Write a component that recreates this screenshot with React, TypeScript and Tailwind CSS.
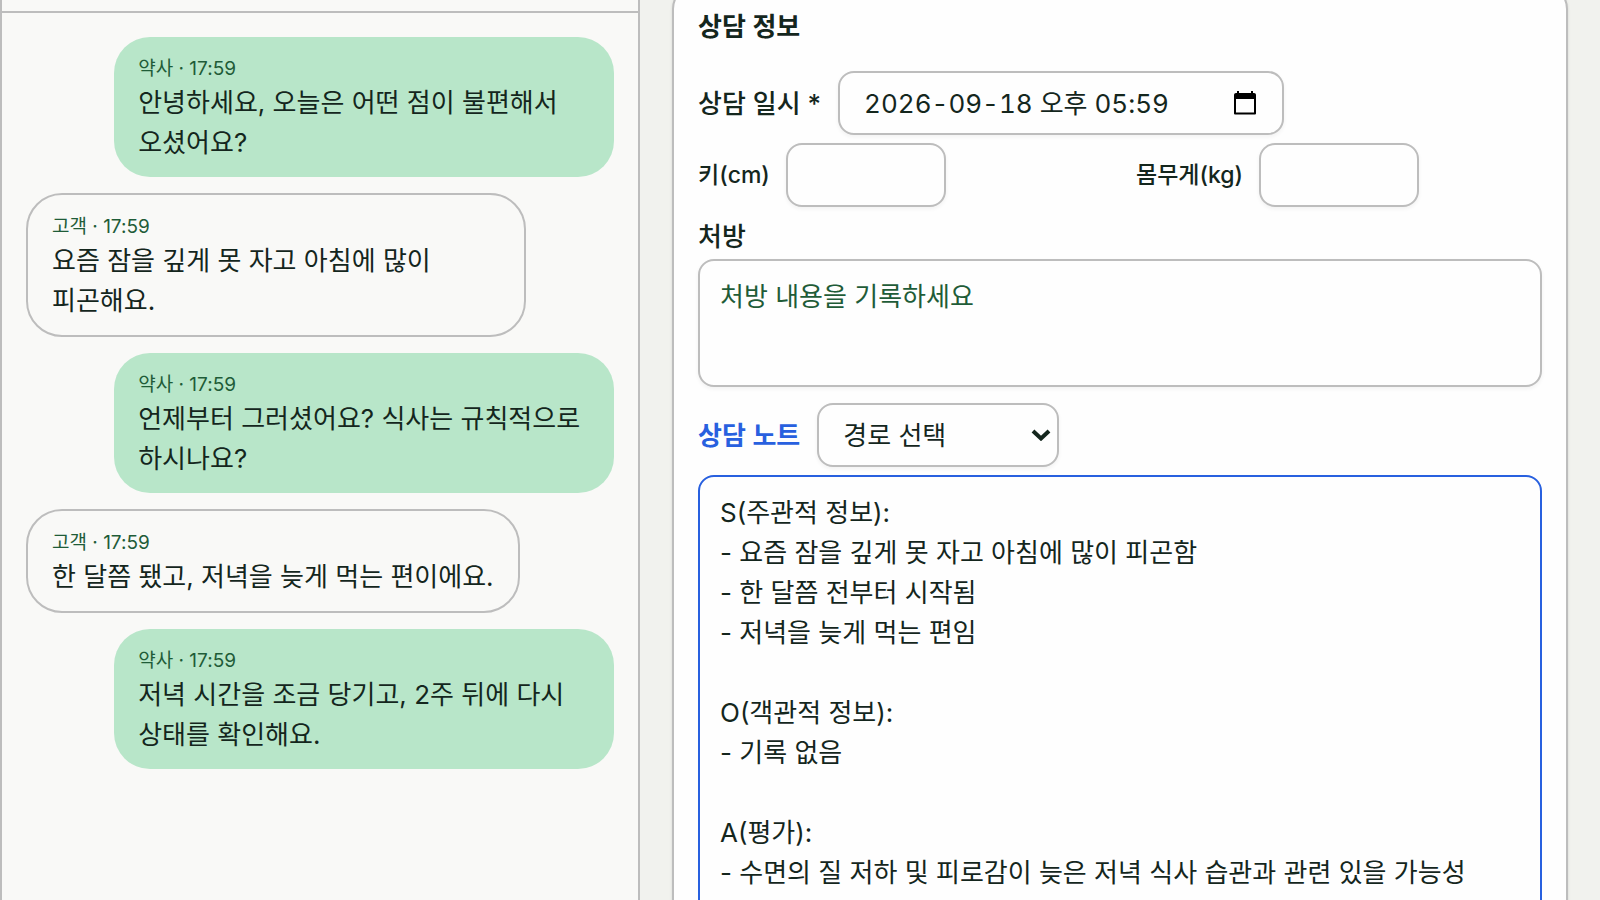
import React, { useState } from 'react';

interface Message {
  id: number;
  role: 'pharmacist' | 'customer';
  time: string;
  text: string;
}

const messages: Message[] = [
  { id: 1, role: 'pharmacist', time: '17:59', text: '안녕하세요, 오늘은 어떤 점이 불편해서 오셨어요?' },
  { id: 2, role: 'customer', time: '17:59', text: '요즘 잠을 깊게 못 자고 아침에 많이 피곤해요.' },
  { id: 3, role: 'pharmacist', time: '17:59', text: '언제부터 그러셨어요? 식사는 규칙적으로 하시나요?' },
  { id: 4, role: 'customer', time: '17:59', text: '한 달쯤 됐고, 저녁을 늦게 먹는 편이에요.' },
  { id: 5, role: 'pharmacist', time: '17:59', text: '저녁 시간을 조금 당기고, 2주 뒤에 다시 상태를 확인해요.' },
];

const initialNote = `S(주관적 정보):
- 요즘 잠을 깊게 못 자고 아침에 많이 피곤함
- 한 달쯤 전부터 시작됨
- 저녁을 늦게 먹는 편임

O(객관적 정보):
- 기록 없음

A(평가):
- 수면의 질 저하 및 피로감이 늦은 저녁 식사 습관과 관련 있을 가능성`;

const fieldClass =
  'rounded-2xl border-2 border-[#bdbdbd] bg-[#fefefe] shadow-[0_2px_4px_rgba(0,0,0,0.05)] focus:outline-none';

const MessageBubble: React.FC<{ message: Message }> = ({ message }) => {
  const isPharmacist = message.role === 'pharmacist';

  return (
    <li
      className={
        isPharmacist
          ? 'max-w-[85%] self-end rounded-[36px] bg-[#b8e6c9] px-6 pt-[18px] pb-[14px]'
          : 'max-w-[85%] self-start rounded-[36px] border-2 border-[#bdbdbd] px-6 pt-[18px] pb-[14px]'
      }
    >
      <p className="text-[19px] leading-7 text-[#1f5c38]">
        {isPharmacist ? '약사' : '고객'} · {message.time}
      </p>
      <p className="break-keep leading-10">{message.text}</p>
    </li>
  );
};

export default function App() {
  const [date, setDate] = useState('2026-09-18 오후 05:59');
  const [height, setHeight] = useState('');
  const [weight, setWeight] = useState('');
  const [prescription, setPrescription] = useState('');
  const [route, setRoute] = useState('');
  const [note, setNote] = useState(initialNote);

  return (
    <div className="grid h-screen grid-cols-[2fr_3fr] overflow-hidden bg-[#f1f2ee] font-['Inter','Noto_Sans_CJK_KR',sans-serif] text-[26px] text-[#14261d]">
      {/* Conversation */}
      <section className="border-x-2 border-[#bdbdbd] bg-[#f9f9f7]">
        <header className="h-[13px] border-b-2 border-[#bdbdbd]" />
        <ul className="flex flex-col gap-4 p-6">
          {messages.map((message) => (
            <MessageBubble key={message.id} message={message} />
          ))}
        </ul>
      </section>

      {/* Consultation form */}
      <main className="px-8">
        <form className="-mt-[15px] rounded-3xl border-2 border-[#bdbdbd] bg-[#fefefe] p-6 shadow-sm">
          <h2 className="mb-7 leading-8 font-semibold">상담 정보</h2>

          <div className="flex items-center gap-[17px]">
            <label htmlFor="date" className="font-medium">
              상담 일시 *
            </label>
            <div className="relative w-[446px]">
              <input
                id="date"
                type="text"
                className={`${fieldClass} block h-16 w-full px-6 pb-1 tabular-nums`}
                value={date}
                onChange={(e) => setDate(e.target.value)}
                required
              />
              <button
                type="button"
                aria-label="날짜 선택"
                className="absolute inset-y-0 right-7 flex items-center"
              >
                <svg className="h-6 w-[22px]" viewBox="0 0 22 24" fill="none">
                  <path d="M1 4.5h20v18H1z" stroke="#000" strokeWidth="2" strokeLinejoin="round" />
                  <path d="M0 4a2 2 0 0 1 2-2h1V0h2v2h12V0h2v2h1a2 2 0 0 1 2 2v4H0z" fill="#000" />
                </svg>
              </button>
            </div>
          </div>

          <div className="mt-2 grid grid-cols-2 gap-8">
            <div className="flex items-center gap-4">
              <label htmlFor="height" className="text-[23px] font-medium">
                키(cm)
              </label>
              <input
                id="height"
                type="text"
                inputMode="decimal"
                className={`${fieldClass} h-16 w-40 px-5`}
                value={height}
                onChange={(e) => setHeight(e.target.value)}
              />
            </div>
            <div className="flex items-center gap-4">
              <label htmlFor="weight" className="text-[23px] font-medium">
                몸무게(kg)
              </label>
              <input
                id="weight"
                type="text"
                inputMode="decimal"
                className={`${fieldClass} h-16 w-40 px-5`}
                value={weight}
                onChange={(e) => setWeight(e.target.value)}
              />
            </div>
          </div>

          <div className="mt-4 flex flex-col gap-2">
            <label htmlFor="prescription" className="leading-7 font-medium">
              처방
            </label>
            <textarea
              id="prescription"
              className={`${fieldClass} h-32 w-full resize-none px-5 py-4 leading-10 placeholder:text-[#1f5c38]`}
              placeholder="처방 내용을 기록하세요"
              value={prescription}
              onChange={(e) => setPrescription(e.target.value)}
            />
          </div>

          <div className="mt-4 flex items-center gap-[17px]">
            <label htmlFor="note" className="font-semibold text-[#2860df]">
              상담 노트
            </label>
            <div className="relative w-[242px]">
              <select
                aria-label="경로 선택"
                className={`${fieldClass} block h-16 w-full appearance-none px-6`}
                value={route}
                onChange={(e) => setRoute(e.target.value)}
              >
                <option value="">경로 선택</option>
              </select>
              <svg
                className="pointer-events-none absolute top-1/2 right-2 h-3 w-5 -translate-y-1/2"
                viewBox="0 0 20 12"
                fill="none"
              >
                <path d="M2 2l8 7.5L18 2" stroke="#14261d" strokeWidth="4" />
              </svg>
            </div>
          </div>

          <textarea
            id="note"
            className="mt-2 block h-[600px] w-full resize-none rounded-2xl border-2 border-[#2860df] bg-[#fefefe] px-5 py-4 leading-10 focus:outline-none"
            value={note}
            onChange={(e) => setNote(e.target.value)}
          />
        </form>
      </main>
    </div>
  );
}
